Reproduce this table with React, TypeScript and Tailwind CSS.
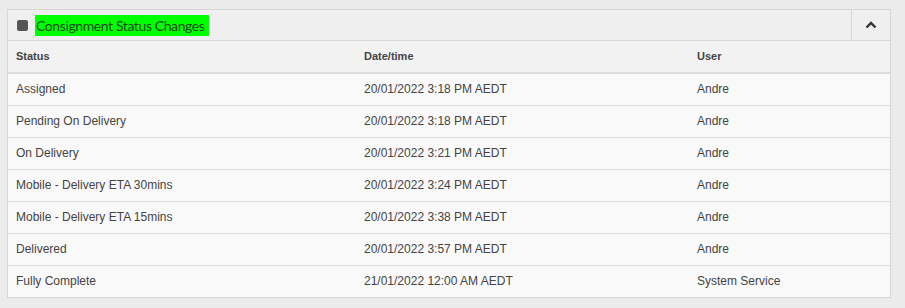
import React from "react";

const rows = [
  ["Assigned", "20/01/2022 3:18 PM AEDT", "Andre"],
  ["Pending On Delivery", "20/01/2022 3:18 PM AEDT", "Andre"],
  ["On Delivery", "20/01/2022 3:21 PM AEDT", "Andre"],
  ["Mobile - Delivery ETA 30mins", "20/01/2022 3:24 PM AEDT", "Andre"],
  ["Mobile - Delivery ETA 15mins", "20/01/2022 3:38 PM AEDT", "Andre"],
  ["Delivered", "20/01/2022 3:57 PM AEDT", "Andre"],
  ["Fully Complete", "21/01/2022 12:00 AM AEDT", "System Service"],
];

export default function App() {
  return (
    <div className="w-[905px] h-[308px] bg-[#ebebeb] pl-[7px] pt-[9px] font-['Liberation_Sans',Arial,sans-serif]">
      <div className="w-[884px] border border-[#d6d6d6] bg-[#f9f9f9]">
        <div className="flex h-[31px] border-b border-[#d6d6d6] bg-[#efefef]">
          <div className="flex flex-1 items-center pl-[8px]">
            <span className="ml-[1px] h-[11px] w-[11px] rounded-[2px] bg-[#555555]" />
            <span className="ml-[7px] flex h-[21px] items-center bg-[#00ff00] pl-[1px] pr-[4px] font-['Lato',sans-serif] text-[14px] tracking-[-0.4px] text-[#1c4a1c]">
              Consignment Status Changes
            </span>
          </div>
          <div className="flex w-[39px] items-center justify-center border-l border-[#d6d6d6]">
            <svg width="12" height="8" viewBox="0 0 12 8">
              <path d="M1.5 6.5 L6 2 L10.5 6.5" fill="none" stroke="#333" strokeWidth="2.4" />
            </svg>
          </div>
        </div>
        <table className="w-full border-collapse text-[12px] text-[#333]">
          <thead>
            <tr className="h-[32px] bg-[#f2f2f2] border-b-2 border-[#dcdcdc]">
              <th className="w-[348px] pl-[8px] text-left text-[11px] font-bold text-[#444]">Status</th>
              <th className="w-[333px] pl-[8px] text-left text-[11px] font-bold text-[#444]">Date/time</th>
              <th className="pl-[8px] text-left text-[11px] font-bold text-[#444]">User</th>
            </tr>
          </thead>
          <tbody>
            {rows.map((r, i) => (
              <tr key={i} className={"h-[32px] " + (i < rows.length - 1 ? "border-b border-[#dddddd]" : "")}>
                <td className="pl-[8px] text-[#444]">{r[0]}</td>
                <td className="pl-[8px] text-[#444]">{r[1]}</td>
                <td className="pl-[8px] text-[#444]">{r[2]}</td>
              </tr>
            ))}
          </tbody>
        </table>
      </div>
    </div>
  );
}
